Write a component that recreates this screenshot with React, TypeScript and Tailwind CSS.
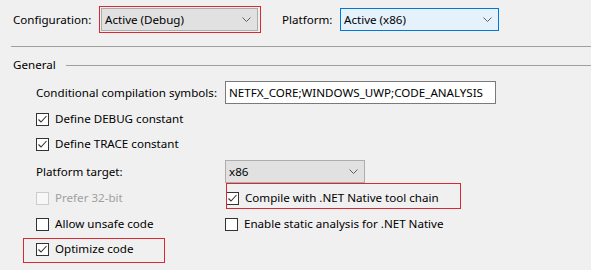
import React from "react";

const Chevron = () => (
  <svg width="9" height="5" viewBox="0 0 9 5" className="shrink-0">
    <path d="M0.5 0.5 L4.5 4.5 L8.5 0.5" fill="none" stroke="#606060" strokeWidth="1" />
  </svg>
);

const Check = ({ checked, disabled }: { checked?: boolean; disabled?: boolean }) => (
  <div
    className={
      "w-[13px] h-[13px] shrink-0 border flex items-center justify-center " +
      (disabled ? "border-[#cccccc] bg-[#f7f7f7]" : "border-[#333333] bg-white")
    }
  >
    {checked && (
      <svg width="11" height="11" viewBox="0 0 11 11">
        <path d="M1.5 5.5 L4 8 L9.5 2" fill="none" stroke="#333333" strokeWidth="1.1" />
      </svg>
    )}
  </div>
);

const CheckRow = ({
  label,
  checked,
  disabled,
}: {
  label: string;
  checked?: boolean;
  disabled?: boolean;
}) => (
  <div className="flex items-center h-[16px] gap-[6px]">
    <Check checked={checked} disabled={disabled} />
    <span className={disabled ? "text-[#a0a0a0]" : "text-black"}>{label}</span>
  </div>
);

export default function App() {
  return (
    <div
      className="w-[591px] h-[270px] bg-[#f0f0f0] text-[11.6px] leading-[16px] text-black overflow-hidden relative"
      style={{ fontFamily: '"Noto Sans", "Open Sans", sans-serif' }}
    >
      {/* top row */}
      <div className="flex items-center h-[23px] mt-[8px]">
        <span className="ml-[13px] w-[88px]">Configuration:</span>
        <div className="w-[157px] h-[23px] border border-[#adadad] bg-[#e1e1e1] flex items-center justify-between pl-[3px] pr-[6px]">
          <span>Active (Debug)</span>
          <Chevron />
        </div>
        <span className="ml-[24px] w-[58px]">Platform:</span>
        <div className="w-[159px] h-[23px] border border-[#0078d7] bg-[#e5f1fb] flex items-center justify-between pl-[3px] pr-[6px]">
          <span>Active (x86)</span>
          <Chevron />
        </div>
      </div>

      <div className="ml-[11px] mt-[15px] h-px bg-[#a0a0a0]" />

      <div className="flex items-center mt-[10px] h-[16px]">
        <span className="ml-[13px]">General</span>
        <div className="ml-[10px] flex-1 h-px bg-[#a0a0a0]" />
      </div>

      <div className="pl-[36px]">
        <div className="grid grid-cols-[189px_1fr] items-center mt-[8px]">
          <span>Conditional compilation symbols:</span>
          <div className="w-[271px] h-[23px] border border-[#7a7a7a] bg-white flex items-center pl-[3px]">
            NETFX_CORE;WINDOWS_UWP;CODE_ANALYSIS
          </div>
        </div>

        <div className="mt-[7px]">
          <CheckRow label="Define DEBUG constant" checked />
        </div>
        <div className="mt-[9px]">
          <CheckRow label="Define TRACE constant" checked />
        </div>

        <div className="grid grid-cols-[189px_1fr] items-center mt-[8px]">
          <span>Platform target:</span>
          <div className="w-[140px] h-[23px] border border-[#adadad] bg-[#e1e1e1] flex items-center justify-between pl-[3px] pr-[6px]">
            <span>x86</span>
            <Chevron />
          </div>
        </div>

        <div className="grid grid-cols-[189px_1fr] mt-[7px]">
          <CheckRow label="Prefer 32-bit" disabled />
          <div className="pl-[1px]">
            <CheckRow label="Compile with .NET Native tool chain" checked />
          </div>
        </div>

        <div className="grid grid-cols-[189px_1fr] mt-[10px]">
          <CheckRow label="Allow unsafe code" />
          <CheckRow label="Enable static analysis for .NET Native" />
        </div>

        <div className="mt-[9px]">
          <CheckRow label="Optimize code" checked />
        </div>
      </div>

      {/* annotation highlight boxes */}
      <div className="absolute left-[99px] top-[6px] w-[162px] h-[27px] border border-[#d42a35]" />
      <div className="absolute left-[226px] top-[183px] w-[235px] h-[26px] border border-[#d42a35]" />
      <div className="absolute left-[23px] top-[238px] w-[142px] h-[25px] border border-[#d42a35]" />
    </div>
  );
}
